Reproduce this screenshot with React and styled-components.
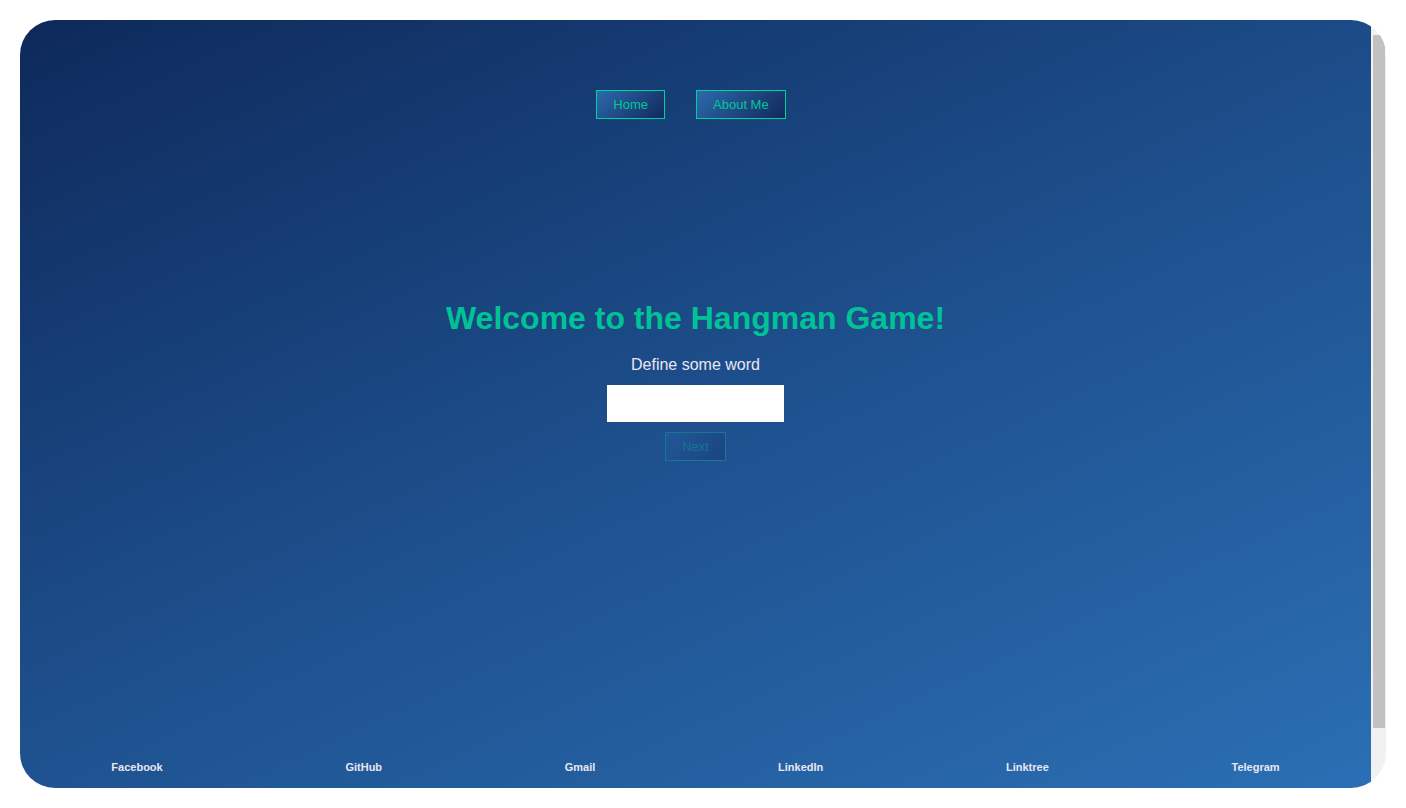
import { useState } from "react";
import styled, { createGlobalStyle } from "styled-components";

const GlobalStyle = createGlobalStyle`
  html, body {
    margin: 0;
    height: 100%;
    background: #ffffff;
  }
  body {
    padding: 20px 20px 20px 20px;
    box-sizing: border-box;
    font-family: "Liberation Sans", Arial, sans-serif;
  }
  #root {
    height: 100%;
  }
`

const Frame = styled.div`
  display: flex;
  height: 100%;
  border-radius: 35px;
  overflow: hidden;
`

const Scroller = styled.div`
  flex: 1;
  overflow: hidden;
  background: linear-gradient(155deg, #0e295b 0%, #1d4f8c 50%, #2b6fb4 100%);
`

const Rail = styled.div`
  display: flex;
  flex-direction: column;
  width: 15px;
  padding: 15px 1px 0 2px;
  box-sizing: border-box;
  background: #f1f1f1;
`

const Thumb = styled.div`
  height: 693px;
  background: #c1c1c1;
`

const Page = styled.div`
  display: flex;
  flex-direction: column;
  padding: 70px 0 64px;
`

const Nav = styled.nav`
  display: flex;
  justify-content: center;
  gap: 22px;

  button {
    margin-right: 9px;
  }
`

const Button = styled.button`
  font-family: "Liberation Sans", Arial, sans-serif;
  font-size: 13px;
  line-height: 15px;
  padding: 6px 16px;
  color: #00c896;
  border: 1px solid #00d29c;
  background: linear-gradient(135deg, #2c6aae 0%, #11295b 100%);
  cursor: pointer;
  opacity: ${(p) => (p.disabled ? 0.3 : 1)};
`

const Main = styled.main`
  display: flex;
  flex-direction: column;
  align-items: center;
  margin-top: 181px;
`

const Title = styled.h1`
  margin: 0;
  font-size: 32px;
  line-height: 37px;
  font-weight: bold;
  color: #00c296;
`

const Label = styled.label`
  margin-top: 19px;
  font-size: 16px;
  line-height: 18px;
  color: #e8e6f2;
`

const Input = styled.input`
  margin-top: 11px;
  width: 177px;
  height: 37px;
  box-sizing: border-box;
  border: none;
  outline: none;
  padding: 0 8px;
  background: #ffffff;
  font-size: 14px;
`

const NextWrap = styled.div`
  margin-top: 10px;
`

const Footer = styled.footer`
  display: flex;
  justify-content: space-around;
  margin-top: 300px;
`

const FooterLink = styled.a`
  font-size: 11px;
  line-height: 13px;
  font-weight: bold;
  color: #e8e6f2;
  text-decoration: none;
`

const links = ["Facebook", "GitHub", "Gmail", "LinkedIn", "Linktree", "Telegram"];

export default function App() {
  const [word, setWord] = useState("");

  return (
    <>
      <GlobalStyle />
      <Frame>
        <Scroller>
          <Page>
            <Nav>
              <Button>Home</Button>
              <Button>About Me</Button>
            </Nav>
            <Main>
              <Title>Welcome to the Hangman Game!</Title>
              <Label htmlFor="word">Define some word</Label>
              <Input id="word" value={word} onChange={(e) => setWord(e.target.value)} />
              <NextWrap>
                <Button disabled={!word}>Next</Button>
              </NextWrap>
            </Main>
            <Footer>
              {links.map((l) => (
                <FooterLink key={l} href="#">{l}</FooterLink>
              ))}
            </Footer>
          </Page>
        </Scroller>
        <Rail>
          <Thumb />
        </Rail>
      </Frame>
    </>
  );
}
